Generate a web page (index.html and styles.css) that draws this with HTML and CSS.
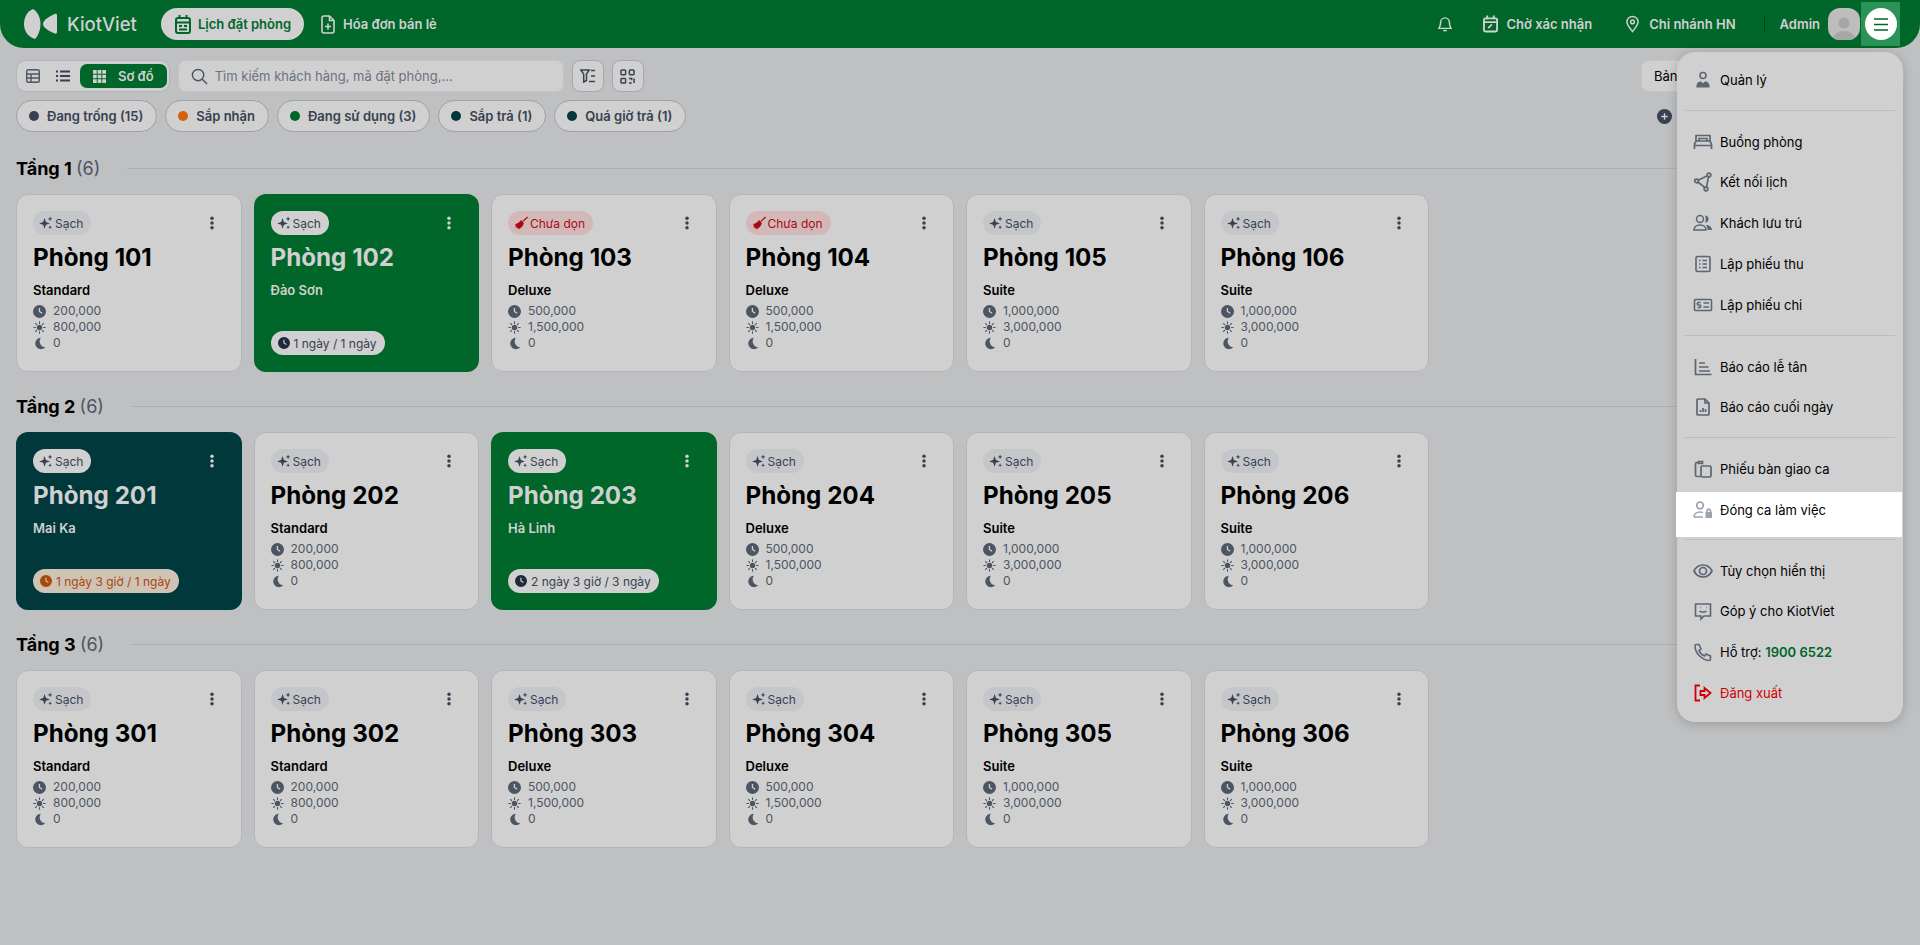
FILE: index.html
```html
<!DOCTYPE html>
<html>
  <head>
    <title>Lịch đặt phòng</title>
    <meta charset='utf-8'>
    <link rel="stylesheet" href="styles.css">
  </head>
  <body>
    <svg class="sprites" xmlns="http://www.w3.org/2000/svg">
      <symbol id="i-clock" viewBox="1 1 22 22"><path fill="currentColor" fill-rule="evenodd" d="M12 1a11 11 0 1 0 0 22 11 11 0 0 0 0-22zm-1.200 5h2.200v5.400l4 2.400-1.100 1.800-5.100-3.100z"/></symbol>
      <symbol id="i-sun" viewBox="0 0 24 24"><circle cx="12" cy="12" r="5" fill="currentColor"/><path stroke="currentColor" stroke-width="2" stroke-linecap="round" d="M12 1.500v3M12 19.500v3M1.500 12h3M19.500 12h3M4.600 4.600l2.100 2.100M17.300 17.300l2.100 2.100M4.600 19.400l2.100-2.100M17.300 6.700l2.100-2.100"/></symbol>
      <symbol id="i-moon" viewBox="0 0 24 24"><path fill="currentColor" d="M14.500 1.500A10.500 10.500 0 1 0 22.500 19 11 11 0 0 1 14.500 1.500z"/></symbol>
      <symbol id="i-spark" viewBox="0 0 24 24"><path fill="currentColor" d="M9.500 3.500l2.300 6.700 7 2.500-7 2.500-2.300 6.800-2.300-6.800-7-2.500 7-2.500zM19 1l1.200 3 2.800 1-2.800 1.100L19 9l-1.200-2.900L15 5l2.800-1zM19 16l1 2.300 2.300 1-2.300 1-1 2.500-1-2.500-2.200-1 2.200-1z"/></symbol>
      <symbol id="i-broom" viewBox="0 0 24 24"><path fill="currentColor" d="M22.500 1L14.500 8.500l1.500 1.500L24 2.500zM12 7l5 5c-1 5-5 9-9 11l-.5-3-2.500 2-.5-3.500-2.500 1 1.500-4L1 14c4 0 8-2.500 11-7z"/></symbol>
      <symbol id="i-dots" viewBox="0 0 24 24"><circle cx="12" cy="4" r="3" fill="currentColor"/><circle cx="12" cy="12" r="3" fill="currentColor"/><circle cx="12" cy="20" r="3" fill="currentColor"/></symbol>
    </svg>

    <header class="topbar">
      <a class="logo">
        <svg width="33" height="30" viewBox="0 0 33 30"><path fill="#d0d0d0" d="M9 0C3.500 2 0 8 0 15c0 7 4 13 11 15 3-3 5.500-9 5.500-15S14 3 9 0z"/><path fill="#d0d0d0" d="M33 6.500c0-1.500-1-2-2-1.500-5 2-12 6-12 10s7 7.500 12 9.500c1 .5 2 0 2-1.500z"/></svg>
        <span>KiotViet</span>
      </a>
      <a class="nav-pill">
        <svg width="16" height="19" viewBox="0 0 16 19" fill="none" stroke="#006629" stroke-width="2"><rect x="1" y="3" width="14" height="15" rx="2"/><path d="M4.500 0v4M11.500 0v4M1 7.500h14"/><path d="M4 11h3M9 11h3M4 14.500h8"/></svg>
        Lịch đặt phòng
      </a>
      <a class="nav-link">
        <svg width="14" height="19" viewBox="0 0 14 19" fill="none" stroke="#d0d0d0" stroke-width="1.600"><path d="M1 3a2 2 0 0 1 2-2h5.500L13 5.500V16a2 2 0 0 1-2 2H3a2 2 0 0 1-2-2z"/><path d="M8.500 1v4.500H13M7 8.500v6M4 11.500h6"/></svg>
        Hóa đơn bán lẻ
      </a>
      <div class="topbar-right">
        <svg class="bell" width="14" height="18" viewBox="0 0 16 18" fill="none" stroke="#d0d0d0" stroke-width="1.700"><path d="M3 7a5 5 0 0 1 10 0c0 4 1 5 2 7H1c1-2 2-3 2-7z"/><path d="M6 16.500h4"/></svg>
        <a class="nav-link status">
          <svg width="15" height="18" viewBox="0 0 16 18" fill="none" stroke="#d0d0d0" stroke-width="2"><rect x="1" y="3" width="14" height="14" rx="1.500"/><path d="M4.500 0v4M11.500 0v4M1 7h14"/><path stroke-width="1.800" d="M5.500 13.500l4-4"/></svg>
          Chờ xác nhận
        </a>
        <a class="nav-link branch">
          <svg width="13" height="18" viewBox="0 0 14 18" fill="none" stroke="#d0d0d0" stroke-width="1.600"><path d="M7 17C3.500 12.500 1 9.800 1 6.800a6 6 0 0 1 12 0c0 3-2.500 5.700-6 10.200z"/><circle cx="7" cy="6.800" r="2"/></svg>
          Chi nhánh HN
        </a>
        <span class="bar-sep"></span>
        <span class="admin">Admin</span>
        <span class="avatar">
          <svg width="32" height="32" viewBox="0 0 32 32"><circle cx="16" cy="15" r="5.500" fill="#a6a6a6"/><path fill="#a6a6a6" d="M5 32c0-6 5-9 11-9s11 3 11 9z"/></svg>
        </span>
        <span class="menu-spot">
          <span class="menu-btn">
            <svg width="14" height="13" viewBox="0 0 14 13" stroke="#006629" stroke-width="1.500"><path d="M0 1h14M0 6.500h14M0 12h14"/></svg>
          </span>
        </span>
      </div>
    </header>

    <div class="toolbar">
      <div class="view-switch">
        <span class="view-icon">
          <svg width="14" height="14" viewBox="0 0 14 14" fill="none" stroke="#4b5563" stroke-width="1.400"><rect x=".7" y=".7" width="12.600" height="12.600" rx="1.500"/><path d="M1 5h12M1 9h12M5 5v8"/></svg>
        </span>
        <span class="view-icon">
          <svg width="14" height="12" viewBox="0 0 14 12" stroke="#374151" stroke-width="2"><path d="M0 1.500h2M4 1.500h10M0 6h2M4 6h10M0 10.500h2M4 10.500h10"/></svg>
        </span>
        <span class="view-active">
          <svg width="13" height="13" viewBox="0 0 14 14" fill="#d0d0d0"><path d="M0 0h4v4H0zM5 0h4v4H5zM10 0h4v4h-4zM0 5h4v4H0zM5 5h4v4H5zM10 5h4v4h-4zM0 10h4v4H0zM5 10h4v4H5zM10 10h4v4h-4z"/></svg>
          Sơ đồ
        </span>
      </div>
      <div class="search">
        <svg width="17" height="17" viewBox="0 0 18 18" fill="none" stroke="#4b5563" stroke-width="1.500"><circle cx="7.500" cy="7.500" r="6"/><path d="M12 12l5 5"/></svg>
        <span>Tìm kiếm khách hàng, mã đặt phòng,...</span>
      </div>
      <span class="square-btn">
        <svg width="16" height="14" viewBox="0 0 16 14" stroke="#374151" stroke-width="1.500" fill="none"><path d="M.8 1h8.400L6.500 5v6.500L3.700 13V5z"/><path d="M11 1.500h4M11 7h4M9 12.500h6"/></svg>
      </span>
      <span class="square-btn">
        <svg width="15" height="15" viewBox="0 0 16 16" stroke="#374151" stroke-width="1.600" fill="none"><rect x="1" y="1" width="5" height="5" rx="1"/><rect x="10" y="1" width="5" height="5" rx="1"/><rect x="1" y="10" width="5" height="5" rx="1"/><path d="M9.500 10h3v2M15 10v5M9.500 15h3"/></svg>
      </span>
      <div class="map-btn">
        <span>Bản đồ</span>
        <span class="map-active"></span>
      </div>
    </div>

    <div class="filters">
      <span class="chip"><i class="dot dot-slate"></i>Đang trống (15)</span>
      <span class="chip"><i class="dot dot-orange"></i>Sắp nhận</span>
      <span class="chip"><i class="dot dot-green"></i>Đang sử dụng (3)</span>
      <span class="chip"><i class="dot dot-teal"></i>Sắp trả (1)</span>
      <span class="chip"><i class="dot dot-teal"></i>Quá giờ trả (1)</span>
      <span class="add-floor"><svg width="15" height="15" viewBox="0 0 14 14"><circle cx="7" cy="7" r="7" fill="#374151"/><path stroke="#d0d0d0" stroke-width="1.300" d="M7 4v6M4 7h6"/></svg></span>
    </div>

    <main id="floors"></main>

    <nav class="menu">
      <a class="menu-item">
        <svg viewBox="0 0 20 20" fill="none" stroke="#5b6573" stroke-width="1.600"><circle cx="10" cy="5.500" r="3"/><path fill="#5b6573" stroke="none" d="M3.500 17.500c-.3-3.500 1.200-6 4.500-6l2 1.800 2-1.800c3.300 0 4.800 2.500 4.500 6z"/></svg>
        <span>Quản lý</span>
      </a>
      <hr class="menu-sep">
      <a class="menu-item">
        <svg viewBox="0 0 20 20" fill="none" stroke="#5b6573" stroke-width="1.700"><path d="M3 9V3.500h14V9M1.500 17v-5l1.500-3h14l1.500 3v5M1.500 13.500h17"/><path d="M6 9V6.500h8V9"/></svg>
        <span>Buồng phòng</span>
      </a>
      <a class="menu-item">
        <svg viewBox="0 0 20 20" fill="none" stroke="#5b6573" stroke-width="1.700"><circle cx="3.500" cy="9" r="1.800"/><circle cx="16" cy="3" r="1.800"/><circle cx="13" cy="17" r="1.800"/><path d="M5 8.200L14.400 3.800M5 10l6.900 5.700M15.500 4.800L13.500 15.200"/></svg>
        <span>Kết nối lịch</span>
      </a>
      <a class="menu-item">
        <svg viewBox="0 0 20 20" fill="none" stroke="#5b6573" stroke-width="1.500"><circle cx="7" cy="6" r="3.500"/><path d="M1 17c0-3 2.500-5 6-5s6 2 6 5z"/><path fill="#5b6573" stroke="none" d="M12 2.500a3.500 3.500 0 0 1 0 7c1-2 1-5 0-7zM14.500 12c2.500.5 4.500 2.500 4.500 5h-4.500c0-2-.5-3.500-1.500-4.500z"/></svg>
        <span>Khách lưu trú</span>
      </a>
      <a class="menu-item">
        <svg viewBox="0 0 20 20" fill="none" stroke="#5b6573" stroke-width="1.600"><rect x="3" y="2.500" width="14" height="15" rx="1.500"/><path d="M6 6.500h1.500M9.500 6.500H14M6 10h1.500M9.500 10H14M6 13.500h1.500M9.500 13.500H14"/></svg>
        <span>Lập phiếu thu</span>
      </a>
      <a class="menu-item">
        <svg viewBox="0 0 20 20" fill="none" stroke="#5b6573" stroke-width="1.600"><rect x="1.500" y="4.500" width="17" height="11" rx="1"/><path d="M10.500 8h5.500M10.500 12h5.500M7.500 7.500H5.500a1.200 1.200 0 0 0 0 2.500h1a1.200 1.200 0 0 1 0 2.500H4.500"/></svg>
        <span>Lập phiếu chi</span>
      </a>
      <hr class="menu-sep">
      <a class="menu-item">
        <svg viewBox="0 0 20 20" fill="none" stroke="#5b6573" stroke-width="1.700"><path d="M2.500 2v15.500h16M6 6h6M6 10h9.500M6 14h11"/></svg>
        <span>Báo cáo lễ tân</span>
      </a>
      <a class="menu-item">
        <svg viewBox="0 0 20 20" fill="none" stroke="#5b6573" stroke-width="1.700"><path d="M4 3a1 1 0 0 1 1-1h7l4 4v11a1 1 0 0 1-1 1H5a1 1 0 0 1-1-1z"/><path d="M12 2v4h4M7.500 15v-2M10 15v-4M12.500 15v-3"/></svg>
        <span>Báo cáo cuối ngày</span>
      </a>
      <hr class="menu-sep">
      <a class="menu-item">
        <svg viewBox="0 0 20 20" fill="none" stroke="#5b6573" stroke-width="1.700"><path d="M7.500 17.500H4a1.500 1.500 0 0 1-1.500-1.500V5A1.500 1.500 0 0 1 4 3.500h1.500M5.500 2.500h4v2h-4z"/><rect x="8" y="7" width="10" height="11" rx="1.500"/></svg>
        <span>Phiếu bàn giao ca</span>
      </a>
      <a class="menu-item menu-item-on">
        <svg viewBox="0 0 20 20" fill="none" stroke="#9ca3af" stroke-width="1.700"><circle cx="7" cy="5.500" r="3.300"/><path d="M1 17c0-3 2.500-5 6-5 1 0 2 .2 3 .5M1 17h9"/><path fill="#9ca3af" stroke="none" d="M12.500 12h6.500v6h-6.500z"/><path d="M14 12v-1.500a1.800 1.800 0 0 1 3.500 0V12"/></svg>
        <span>Đóng ca làm việc</span>
      </a>
      <hr class="menu-sep menu-sep-tight">
      <a class="menu-item">
        <svg viewBox="0 0 20 20" fill="none" stroke="#5b6573" stroke-width="1.700"><path d="M1 10c2-4 5-6 9-6s7 2 9 6c-2 4-5 6-9 6s-7-2-9-6z"/><circle cx="10" cy="10" r="3.500"/></svg>
        <span>Tùy chọn hiển thị</span>
      </a>
      <a class="menu-item">
        <svg viewBox="0 0 20 20" fill="none" stroke="#5b6573" stroke-width="1.600"><path d="M2.500 3h15v12H11l-3 3v-3H2.500z"/><path d="M6.500 10c1.500 1.500 5.500 1.500 7 0M7 6.500h.5M13 6.500h.5"/></svg>
        <span>Góp ý cho KiotViet</span>
      </a>
      <a class="menu-item">
        <svg viewBox="0 0 20 20" fill="none" stroke="#5b6573" stroke-width="1.600"><path d="M3 2.500h3l2 4.500-2 1.500c1 2.500 3 4.500 5.500 5.500l1.500-2 4.500 2v3c0 1-.8 1.500-1.500 1.500C9 18 2 11 2 4c0-.8.500-1.500 1-1.500z"/></svg>
        <span>Hỗ trợ: <b class="phone">1900 6522</b></span>
      </a>
      <a class="menu-item menu-item-out">
        <svg viewBox="0 0 20 20" fill="none" stroke="#d10000" stroke-width="1.800"><path d="M7 2.500H2.500v15H7"/><path d="M7.500 8h4V5l6 5-6 5v-3h-4z"/></svg>
        <span>Đăng xuất</span>
      </a>
    </nav>

    <script>
      var rooms = [
        { name: 'Tầng 1', list: [
          { no: 101, kind: 'std' },
          { no: 102, kind: 'std', guest: 'Đào Sơn', stay: '1 ngày / 1 ngày', cls: 'room-green' },
          { no: 103, kind: 'dlx', dirty: true },
          { no: 104, kind: 'dlx', dirty: true },
          { no: 105, kind: 'ste' },
          { no: 106, kind: 'ste' }
        ]},
        { name: 'Tầng 2', list: [
          { no: 201, kind: 'std', guest: 'Mai Ka', stay: '1 ngày 3 giờ / 1 ngày', cls: 'room-teal', late: true },
          { no: 202, kind: 'std' },
          { no: 203, kind: 'std', guest: 'Hà Linh', stay: '2 ngày 3 giờ / 3 ngày', cls: 'room-green' },
          { no: 204, kind: 'dlx' },
          { no: 205, kind: 'ste' },
          { no: 206, kind: 'ste' }
        ]},
        { name: 'Tầng 3', list: [
          { no: 301, kind: 'std' },
          { no: 302, kind: 'std' },
          { no: 303, kind: 'dlx' },
          { no: 304, kind: 'dlx' },
          { no: 305, kind: 'ste' },
          { no: 306, kind: 'ste' }
        ]}
      ];
      var kinds = {
        std: ['Standard', '200,000', '800,000'],
        dlx: ['Deluxe', '500,000', '1,500,000'],
        ste: ['Suite', '1,000,000', '3,000,000']
      };

      function icon(name) {
        return '<svg class="ico"><use href="#i-' + name + '"/></svg>';
      }

      function card(r) {
        var k = kinds[r.kind];
        var tag = r.dirty
          ? '<span class="tag tag-dirty">' + icon('broom') + 'Chưa dọn</span>'
          : '<span class="tag">' + icon('spark') + 'Sạch</span>';
        var body;
        if (r.guest) {
          body = '<div class="room-sub">' + r.guest + '</div>' +
            '<span class="stay' + (r.late ? ' stay-late' : '') + '">' + icon('clock') + r.stay + '</span>';
        } else {
          body = '<div class="room-sub">' + k[0] + '</div>' +
            '<div class="price">' + icon('clock') + k[1] + '</div>' +
            '<div class="price">' + icon('sun') + k[2] + '</div>' +
            '<div class="price">' + icon('moon') + '0</div>';
        }
        return '<article class="room ' + (r.cls || '') + '">' +
          '<div class="room-top">' + tag + '<svg class="more"><use href="#i-dots"/></svg></div>' +
          '<h3 class="room-name">Phòng ' + r.no + '</h3>' + body + '</article>';
      }

      document.getElementById('floors').innerHTML = rooms.map(function (f) {
        return '<section class="floor"><h2 class="floor-head"><span>' + f.name +
          ' <em>(' + f.list.length + ')</em></span><i></i></h2>' +
          '<div class="room-grid">' + f.list.map(card).join('') + '</div></section>';
      }).join('');
    </script>
  </body>
</html>
```

FILE: styles.css
```css
html, body {
  margin: 0;
  height: 945px;
  overflow: hidden;
}
body {
  position: relative;
  background: #bfc0c2;
  font-family: 'Inter', 'Liberation Sans', sans-serif;
  font-size: 13px;
  color: #000;
}
.sprites { display: none; }

/* Top bar */
.topbar {
  display: flex;
  align-items: center;
  height: 48px;
  padding: 0 24px;
  background: #006629;
  border-radius: 0 0 24px 24px;
  color: #d0d0d0;
  font-weight: 600;
}
.logo {
  display: flex;
  align-items: center;
  gap: 10px;
  width: 137px;
  font-size: 18.5px;
  font-weight: 500;
}
.nav-pill {
  display: flex;
  align-items: center;
  gap: 7px;
  height: 32px;
  padding: 0 13px 0 14px;
  border-radius: 16px;
  background: #d0d0d0;
  color: #006629;
}
.nav-link {
  display: flex;
  align-items: center;
  gap: 8px;
  margin-left: 17px;
}
.topbar-right {
  display: flex;
  align-items: center;
  margin-left: auto;
  margin-right: -4px;
}
.bell { margin-right: 31px; }
.nav-link.status { margin: 0 34px 0 0; }
.nav-link.branch { margin: 0; gap: 10px; }
.bar-sep {
  width: 1px;
  height: 18px;
  margin: 0 15px 0 28px;
  background: #00441b;
}
.admin { margin-right: 8px; }
.avatar {
  display: block;
  width: 32px;
  height: 32px;
  margin-right: 1px;
  border-radius: 12px;
  background: #bdbdbd;
  overflow: hidden;
}
.menu-spot {
  display: flex;
  align-items: center;
  justify-content: center;
  width: 39px;
  height: 44px;
  background: #2b9355;
}
.menu-btn {
  display: flex;
  align-items: center;
  justify-content: center;
  width: 32px;
  height: 32px;
  border-radius: 50%;
  background: #fff;
}

/* Toolbar */
.toolbar {
  display: flex;
  align-items: center;
  gap: 8px;
  margin: 12px 16px 0;
  height: 32px;
}
.view-switch {
  display: flex;
  align-items: center;
  height: 30px;
  padding: 0 2px 0 1px;
  border: 1px solid #b4b5ba;
  border-radius: 10px;
  background: #d0d0d0;
}
.view-icon {
  display: flex;
  justify-content: center;
  width: 30px;
}
.view-active {
  display: flex;
  align-items: center;
  gap: 12px;
  height: 24px;
  padding: 0 13px;
  margin-left: 2px;
  border-radius: 7px;
  background: #006629;
  color: #d0d0d0;
  font-weight: 600;
  white-space: nowrap;
}
.search {
  display: flex;
  align-items: center;
  gap: 7px;
  width: 364px;
  height: 30px;
  padding: 0 8px 0 12px;
  border: 1px solid #c4c5c9;
  border-radius: 8px;
  background: #d0d0d0;
  color: #6b7280;
}
.square-btn {
  display: flex;
  align-items: center;
  justify-content: center;
  width: 30px;
  height: 30px;
  border: 1px solid #a5a7ad;
  border-radius: 8px;
  background: #d0d0d0;
}
.map-btn {
  display: flex;
  align-items: center;
  justify-content: space-between;
  width: 249px;
  height: 30px;
  margin-left: auto;
  padding-left: 12px;
  border: 1px solid #c4c5c9;
  border-radius: 8px;
  background: #d0d0d0;
}
.map-active {
  width: 40px;
  height: 25px;
  border-radius: 0 6px 6px 0;
  background: #006629;
}

/* Status chips */
.filters {
  display: flex;
  align-items: center;
  gap: 8px;
  margin: 8px 16px 0;
}
.chip {
  display: flex;
  align-items: center;
  gap: 8px;
  height: 30px;
  padding: 0 13px 0 12px;
  border: 1px solid #9fa1a8;
  border-radius: 16px;
  background: #d0d0d0;
  color: #374151;
  font-weight: 600;
}
.dot {
  width: 10px;
  height: 10px;
  border-radius: 50%;
}
.dot-slate { background: #374151; }
.dot-orange { background: #d9600a; }
.dot-green { background: #006629; }
.dot-teal { background: #00383b; }
.add-floor {
  display: flex;
  margin-left: auto;
  margin-right: 232px;
}

/* Floors */
.floor { margin: 22px 16px 0; }
.floor:first-child { margin-top: 24px; }
.floor-head {
  display: flex;
  align-items: center;
  gap: 27px;
  height: 24px;
  margin: 0 0 14px;
  font-size: 18px;
  font-weight: 700;
}
.floor-head em {
  font-style: normal;
  font-weight: 400;
  color: #4b5563;
}
.floor-head i {
  flex: 1;
  height: 1px;
  background: #aeb0b5;
}
.room-grid {
  display: grid;
  grid-template-columns: repeat(8, 1fr);
  gap: 12px;
}
.room {
  height: 178px;
  padding: 16px;
  box-sizing: border-box;
  border: 1px solid #b4b5ba;
  border-radius: 12px;
  background: #d0d0d0;
  color: #4b5563;
}
.room-top {
  display: flex;
  align-items: center;
  justify-content: space-between;
  height: 24px;
}
.ico {
  flex: none;
  width: 12px;
  height: 12px;
}
.more {
  width: 14px;
  height: 14px;
  margin-right: 6px;
  color: #374151;
}
.tag {
  display: inline-flex;
  align-items: center;
  gap: 2px;
  height: 24px;
  padding: 0 8px 0 6px;
  border-radius: 12px;
  background: #c4c6c9;
  color: #374151;
  font-size: 12px;
}
.tag .ico {
  width: 14px;
  height: 14px;
}
.tag-dirty {
  background: #d3b8b9;
  color: #a80a12;
}
.room-name {
  margin: 5px 0 0;
  height: 36px;
  font-size: 24.2px;
  line-height: 36px;
  font-weight: 700;
  color: #000;
}
.room-sub {
  margin-top: 5px;
  height: 18px;
  font-size: 13px;
  line-height: 18px;
  font-weight: 600;
  color: #000;
}
.price {
  display: flex;
  align-items: center;
  gap: 7px;
  height: 16px;
  font-size: 12px;
  line-height: 16px;
  color: #4b5563;
}
.price .ico {
  width: 13px;
  height: 13px;
}
.room-sub + .price { margin-top: 4px; }
.stay {
  display: inline-flex;
  align-items: center;
  gap: 4px;
  height: 24px;
  margin-top: 32px;
  padding: 0 8px 0 7px;
  border-radius: 12px;
  background: #d0d0d0;
  font-size: 12px;
  color: #374151;
}
.stay .ico { color: #1f2937; }
.stay-late {
  background: #cfc3b6;
  color: #a8480a;
}
.stay-late .ico { color: #a8480a; }
.room-green, .room-teal {
  border-color: transparent;
}
.room-green { background: #006629; }
.room-teal { background: #00383b; }
.room-green .room-name, .room-teal .room-name,
.room-green .room-sub, .room-teal .room-sub { color: #d0d0d0; }
.room-green .more, .room-teal .more { color: #d0d0d0; }
.room-green .tag, .room-teal .tag { background: #d0d0d0; }

/* Dropdown menu */
.menu {
  position: absolute;
  top: 52px;
  left: 1677px;
  width: 226px;
  height: 670px;
  box-sizing: border-box;
  padding-top: 7.5px;
  border-radius: 18px;
  background: #d0d0d0;
  box-shadow: 0 2px 12px rgba(0, 0, 0, 0.2);
}
.menu-item {
  display: flex;
  align-items: center;
  gap: 7px;
  height: 40.8px;
  padding-left: 16px;
  font-size: 13px;
}
.menu-item svg {
  flex: none;
  width: 20px;
  height: 20px;
}
.menu-sep {
  height: 1px;
  margin: 9.500px 8px 10.500px;
  border: 0;
  background: #bcbcbe;
}
.menu-item-on {
  height: 37px;
  margin: 2px 1px 0 -1px;
  padding-left: 17px;
  padding-bottom: 8px;
  background: #fff;
}
.menu-sep-tight { margin-top: 2px; }
.phone {
  color: #006629;
  font-weight: 600;
}
.menu-item-out { color: #d10000; }
```
